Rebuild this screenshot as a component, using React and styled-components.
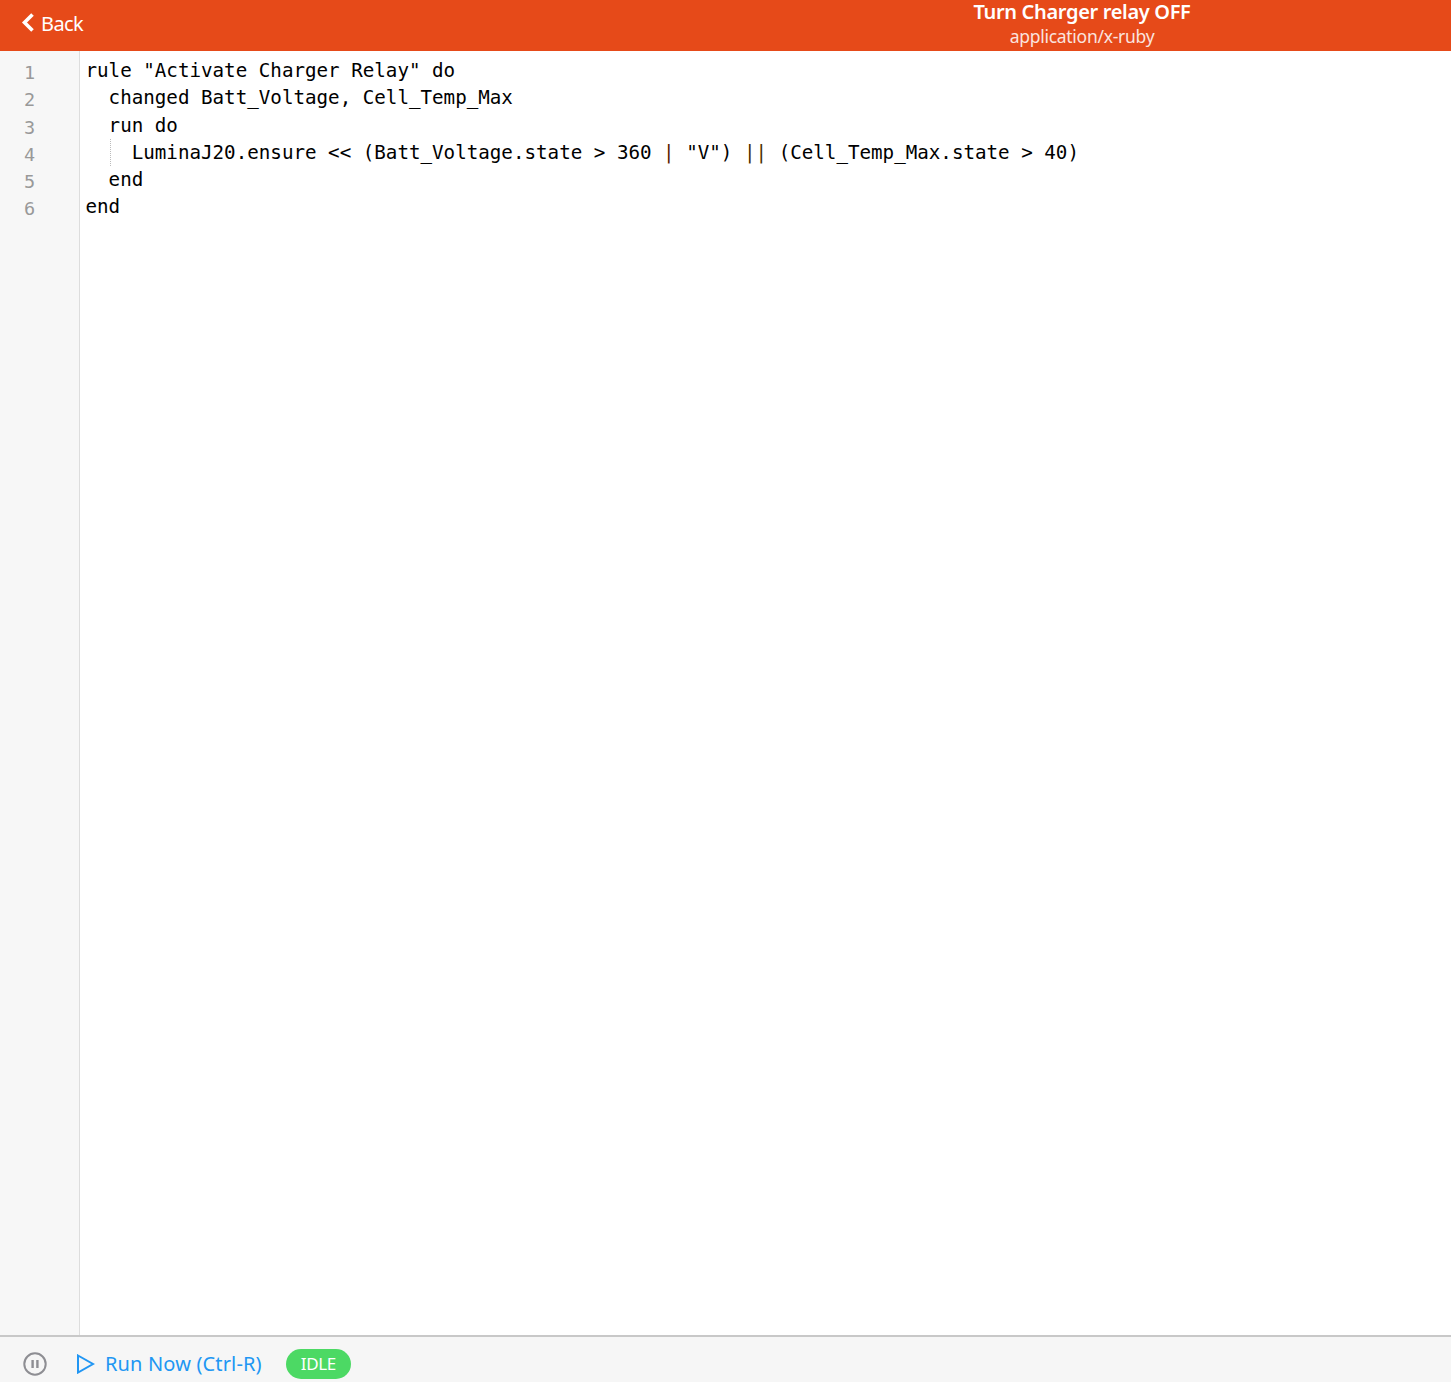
import React from "react";
import styled, { createGlobalStyle } from "styled-components";

const GlobalStyle = createGlobalStyle`
  html, body {
    margin: 0;
    padding: 0;
    background: #fff;
  }
  body {
    font-family: "Noto Sans", "Open Sans", sans-serif;
  }
`;

const Page = styled.div`
  display: flex;
  flex-direction: column;
  height: 1382px;
  overflow: hidden;
`;

const Navbar = styled.header`
  display: grid;
  grid-template-columns: 713px 1fr;
  height: 51px;
  flex-shrink: 0;
  background: #e64a19;
  color: #fff;
`;

const BackLink = styled.a`
  display: flex;
  align-items: center;
  gap: 5px;
  padding: 0 0 5px 21px;
  font-size: 20px;
  letter-spacing: -0.6px;
  color: #fff;
`;

const TitleBlock = styled.div`
  display: flex;
  flex-direction: column;
  align-items: center;
`;

const Title = styled.div`
  font-size: 20px;
  font-weight: 600;
  line-height: 24px;
  letter-spacing: -0.33px;
`;

const Subtitle = styled.div`
  font-size: 17.5px;
  line-height: 24px;
  letter-spacing: -0.28px;
  opacity: 0.85;
`;

const Editor = styled.main`
  display: flex;
  flex: 1;
  min-height: 0;
`;

const Gutter = styled.div`
  width: 79px;
  flex-shrink: 0;
  padding-top: 8px;
  background: #f7f7f7;
  border-right: 1px solid #ddd;
`;

const LineNumber = styled.div`
  height: 27.3px;
  line-height: 27.3px;
  padding-left: 24px;
  font-family: "DejaVu Sans Mono", monospace;
  font-size: 18.5px;
  color: #999;
`;

const Code = styled.div`
  flex: 1;
  padding: 6px 0 0 5.5px;
`;

const CodeLine = styled.div`
  position: relative;
  height: 27.3px;
  line-height: 27.3px;
  font-family: "DejaVu Sans Mono", "Liberation Mono", monospace;
  font-size: 19.2px;
  white-space: pre;
  color: #000;
`;

const IndentGuide = styled.span`
  position: absolute;
  left: 24px;
  top: 0;
  height: 27px;
  border-left: 1px dotted #bbb;
`;

const Pipe = styled.span`
  color: ${(props) => props.$color};
`;

const Footer = styled.footer`
  box-sizing: border-box;
  display: flex;
  align-items: center;
  height: 47px;
  flex-shrink: 0;
  background: #f6f6f6;
  border-top: 2px solid #c8c8c8;
  padding: 8px 0 0 23px;
`;

const RunButton = styled.a`
  display: flex;
  align-items: center;
  gap: 10px;
  margin-left: 29px;
  font-size: 20px;
  letter-spacing: 0.15px;
  color: #2196f3;
`;

const StatusBadge = styled.span`
  display: flex;
  align-items: center;
  justify-content: center;
  width: 65px;
  height: 30px;
  margin-left: 24px;
  border-radius: 15px;
  background: #4cd964;
  color: #fff;
  font-size: 17px;
  letter-spacing: -0.4px;
`;

const ChevronLeft = () => (
  <svg width="15" height="23" viewBox="0 0 15 23" fill="none">
    <path d="M11.5 2.5 L3.5 10.5 L11.5 18.5" stroke="#fff" strokeWidth="3.6" />
  </svg>
);

const PauseIcon = () => (
  <svg width="24" height="24" viewBox="0 0 24 24" fill="none">
    <circle cx="12" cy="12" r="10.7" stroke="#8e8e93" strokeWidth="2" />
    <rect x="8.4" y="8" width="2.4" height="8" fill="#8e8e93" />
    <rect x="13.2" y="8" width="2.4" height="8" fill="#8e8e93" />
  </svg>
);

const PlayIcon = () => (
  <svg width="19" height="20" viewBox="0 0 19 20" fill="none">
    <path d="M2 1.5 L17 10 L2 18.5 Z" stroke="#2196f3" strokeWidth="2" />
  </svg>
);

const lines = [
  <>rule "Activate Charger Relay" do</>,
  <>  changed Batt_Voltage, Cell_Temp_Max</>,
  <>  run do</>,
  <>
    <IndentGuide />
    {"    LuminaJ20.ensure << (Batt_Voltage.state > 360 "}
    <Pipe $color="#5a1a00">|</Pipe>
    {' "V") '}
    <Pipe $color="#4a3000">||</Pipe>
    {" (Cell_Temp_Max.state > 40)"}
  </>,
  <>  end</>,
  <>end</>,
];

export default function App() {
  return (
    <Page>
      <GlobalStyle />
      <Navbar>
        <BackLink>
          <ChevronLeft />
          Back
        </BackLink>
        <TitleBlock>
          <Title>Turn Charger relay OFF</Title>
          <Subtitle>application/x-ruby</Subtitle>
        </TitleBlock>
      </Navbar>
      <Editor>
        <Gutter>
          {lines.map((_, i) => (
            <LineNumber key={i}>{i + 1}</LineNumber>
          ))}
        </Gutter>
        <Code>
          {lines.map((line, i) => (
            <CodeLine key={i}>{line}</CodeLine>
          ))}
        </Code>
      </Editor>
      <Footer>
        <PauseIcon />
        <RunButton>
          <PlayIcon />
          Run Now (Ctrl-R)
        </RunButton>
        <StatusBadge>IDLE</StatusBadge>
      </Footer>
    </Page>
  );
}
